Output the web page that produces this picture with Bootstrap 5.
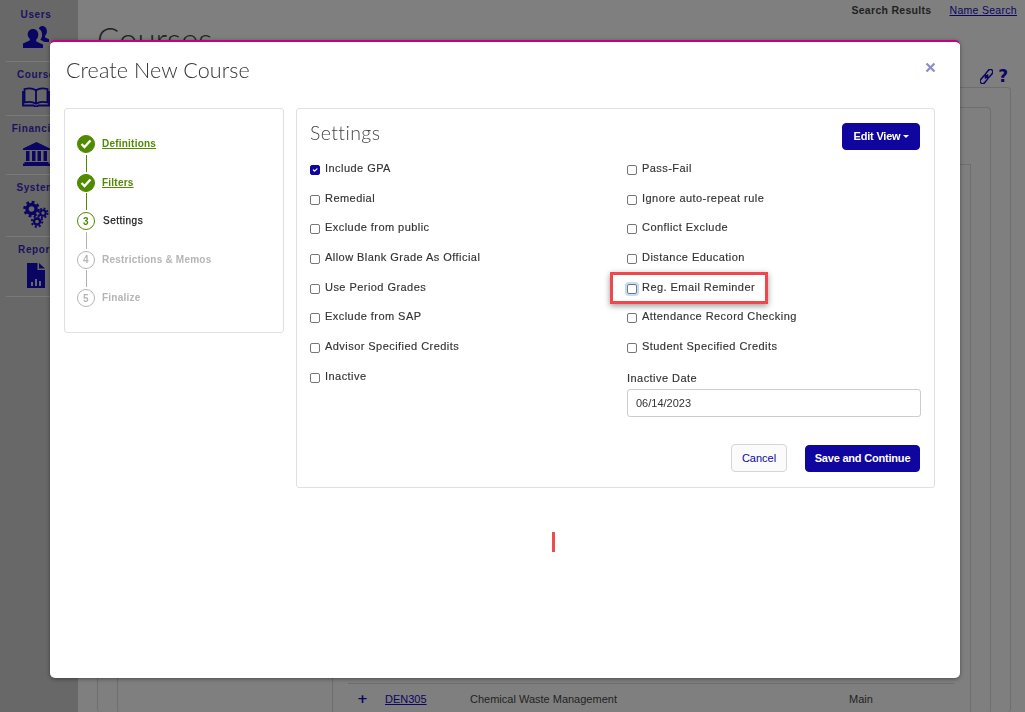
<!DOCTYPE html>
<html lang="en">
<head>
<meta charset="utf-8">
<title>Create New Course</title>
<link rel="stylesheet" href="https://cdn.jsdelivr.net/npm/bootstrap@5.3.0/dist/css/bootstrap.min.css">
<style>
html,body{height:712px;overflow:hidden;background:#7f7f7f;font-family:"Liberation Sans",Arial,sans-serif}
.shell{height:712px}
.side-rail{width:78px;flex:none;background:#686868;padding:0 0 0 6px}
.rail-item{border-bottom:1px solid #7a7a7a;padding-right:12px;text-align:center;color:#1a1260;font-weight:700;font-size:10px;letter-spacing:.6px;line-height:12px;white-space:nowrap}
.rail-item svg{display:block;margin:0 auto;fill:#0a0462}
.rail-item svg.rail-outline{fill:none}
.ri1{height:62px;padding-top:9px}.ri1 svg{margin-top:5px}
.ri2{height:54px;padding-top:7px}.ri2 svg{margin-top:6px}
.ri3{height:59px;padding-top:7px}.ri3 svg{margin-top:7px}
.ri4{height:62px;padding-top:7px}.ri4 svg{margin-top:6px}
.ri5{height:60px;padding-top:7px}.ri5 svg{margin-top:7px}
.page-main{flex:1;min-width:0;padding:0 14px 0 19px}
.top-links{height:19px;padding:3px 0 0 0;margin-right:-6px;font-size:10.5px;letter-spacing:.3px;color:#1f1f1f;gap:18px}
.top-links a{color:#0a0462;font-weight:400}
.page-title{font-family:Lato,sans-serif;font-weight:300;font-size:33px;line-height:40px;color:#222;margin:0;height:50px}
.help-icons{height:18px;gap:5px;padding-right:3px;color:#0a0462;font-family:"DejaVu Sans",sans-serif;font-weight:700;font-size:17px;line-height:14px}
.bg-panel{border:1px solid #6e6e6e;border-radius:4px;border-bottom:0;height:625px;padding:19px 19px 0 19px}
.bg-panel2{height:606px;padding:56px 19px 0 0}
.bg-panel3{height:550px;margin-left:214px;border-radius:0;padding:0;border-left:0}
.bg-list{height:100%;border-left:1px solid #6e6e6e;padding:518px 16px 0 15px}
.bg-row{border-top:1px solid #6e6e6e;height:29px;font-size:11px;color:#1f1f1f;padding-top:7px}
.bg-row a{color:#0a0462;width:85px}
.bg-name{width:379px}
.plus{width:37px;color:#0a0462;font-family:"DejaVu Sans",sans-serif;font-weight:700;padding-left:9px;font-size:13px;line-height:15px}
.dialog-layer{position:fixed;left:50px;top:40px;width:910px;height:638px}
.dlg{height:100%;background:#fff;border:0;border-top:2px solid #c6007e;border-radius:5px;box-shadow:0 1px 4px rgba(0,0,0,.4)}
.dlg-head{height:66px;padding:15px 16px 0 16px}
.dlg-title{font-family:Lato,sans-serif;font-weight:300;font-size:21.5px;line-height:26px;color:#333;margin:0;letter-spacing:.1px}
.dlg-close{background:none;border:0;padding:0;width:12px;height:12px;margin:4px 8px 0 0;line-height:0}
.dlg-body{padding:0 25px 0 14px;gap:12px}
.step-card{width:220px;height:225px;flex:none;border:1px solid #e0e0e0;border-radius:3px;padding:26px 0 0 12px}
.step{height:18px;font-size:10px;font-weight:700;letter-spacing:.22px;gap:7px;line-height:17px;color:#b5b5b5}
.step a{color:#4f8a00}
.step-dot{width:18px;height:18px;flex:none;border-radius:50%;border:1.5px solid #b5b5b5;display:flex;align-items:center;justify-content:center;font-size:10px;color:#b5b5b5;background:#fff}
.step-dot svg{display:block}
.dot-done{background:#4f8a00;border-color:#4f8a00}
.dot-now{border-color:#4f8a00;color:#4f8a00}
.now-label{color:#1c1c1c;padding-left:1px;font-weight:400;letter-spacing:.5px;-webkit-text-stroke:.25px #1c1c1c}
.step-line{width:1px;height:17px;margin:1.75px 0 1.75px 8.5px;background:#b0b0b0}
.line-done{background:#4f8a00}
.set-card{flex:1;height:380px;border:1px solid #e0e0e0;border-radius:3px;padding:14px 13px 0 13px}
.set-title{font-family:Lato,sans-serif;font-weight:300;font-size:19.5px;line-height:20px;letter-spacing:.4px;color:#444;margin:0}
.brand-btn{background:#10069f;border:1px solid #10069f;color:#fff;font-size:11px;font-weight:700;border-radius:4px;line-height:13px;letter-spacing:-.2px}
.brand-btn:hover{background:#10069f;color:#fff}
.edit-btn{width:78px;height:27px;padding:0 0 0 1px;margin-right:1px}
.edit-btn.dropdown-toggle::after{margin-left:3px;border-top-width:3px;border-right-width:3px;border-left-width:3px;vertical-align:2px}
.check-grid{margin:7px 0 0;--bs-gutter-x:0}
.left-col{width:317px;flex:none}
.right-col{width:294px;flex:none}
.chk-row{height:29.7px;display:flex;align-items:flex-start;gap:5px;padding-top:5px;margin:0;font-size:11px;font-weight:400;letter-spacing:.45px;color:#333;line-height:12px;white-space:nowrap;-webkit-text-stroke:.15px #333}
.chk-row .form-check-input{width:10px;height:10px;margin:3px 0 0;flex:none;border-radius:2px;border:1px solid #767676;float:none}
.chk-row .form-check-input:checked{background-color:#10069f;border-color:#10069f}
.glow{position:relative}
.glow .form-check-input{box-shadow:0 0 0 2px #c4dcf6}
.callout{position:absolute;left:-17px;top:-4px;width:158px;height:32px;border:3px solid #f0464c;box-shadow:0 2px 6px rgba(0,0,0,.4);pointer-events:none}
.date-label{font-size:11px;letter-spacing:.45px;color:#333;line-height:12px;margin:7px 0 5px;display:block;-webkit-text-stroke:.15px #333}
.date-input{height:28px;width:294px;font-size:11px;letter-spacing:0;color:#333;border:1px solid #ccc;border-radius:3px;padding:0 8px}
.foot-row{margin-top:27px;gap:18px;padding-right:1px}
.cancel-btn{width:56px;height:28px;padding:0;background:#fbfbfb;border:1px solid #d5d5d5;color:#10069f;font-size:11px;border-radius:4px}
.save-btn{width:115px;height:27px;padding:0}
.cursor-mark{position:fixed;left:552px;top:532px;width:3px;height:20px;background:#ef4a4f}
.bar-gap{fill:#686868}
</style>
</head>
<body>
<div class="shell d-flex">
  <nav class="side-rail">
    <div class="rail-item ri1">Users
      <svg width="26" height="22" viewBox="0 0 26 22"><path d="M10 3c3.200 0 5.300 2.400 5.300 5.700 0 2.200-.9 4-2.200 5l.2 1.700 6.700 3V22H0v-4.600l6.700-3 .2-1.700C5.600 11.700 4.700 10 4.700 8.700 4.700 5.400 6.800 3 10 3z"/><path d="M19 0c3 0 4.900 2.200 4.900 5.300 0 2-.8 3.700-2 4.600l.2 1.500 3.900 1.800V16h-4.500l-4.200-2.200c1.100-1.300 1.800-3.100 1.800-5.100 0-2.800-1.200-5-3.300-6.300C16.500 1 17.600 0 19 0z"/></svg>
    </div>
    <div class="rail-item ri2">Course
      <svg class="rail-outline" width="28" height="20" viewBox="0 0 28 20" stroke="#0a0462" stroke-width="1.800"><path d="M2.500 2C6.500 .9 11 1.200 14 3.300 17 1.200 21.500.9 25.500 2v13.500c-4-1-8.500-.7-11.500 1.200-3-1.900-7.500-2.200-11.500-1.200z"/><path d="M14 3.300v13.400"/><path d="M1 4v14.500h10.500l1.500 1h2l1.500-1H27V4"/></svg>
    </div>
    <div class="rail-item ri3">Financial
      <svg width="27" height="24" viewBox="0 0 27 24"><path d="M13.500 0L27 6.500V8H0V6.500zM3 9h3.500v10H3zM9 9h3.500v10H9zM14.500 9H18v10h-3.500zM20.500 9H24v10h-3.500zM1.500 20h24v1.500h-24zM0 21.500h27V24H0z"/></svg>
    </div>
    <div class="rail-item ri4">System
      <svg class="rail-outline" width="26" height="28" viewBox="0 0 26 28" stroke="#0a0462"><circle cx="8.500" cy="9" r="4.500" stroke-width="3.400"/><circle cx="8.500" cy="9" r="7" stroke-width="2.600" stroke-dasharray="2.750 2.750"/><circle cx="20" cy="13" r="2.700" stroke-width="2"/><circle cx="20" cy="13" r="4.500" stroke-width="2" stroke-dasharray="1.770 1.770"/><circle cx="14" cy="21.500" r="3" stroke-width="2.300"/><circle cx="14" cy="21.500" r="5.200" stroke-width="2" stroke-dasharray="2.040 2.040"/></svg>
    </div>
    <div class="rail-item ri5">Report
      <svg width="18" height="25" viewBox="0 0 18 25"><path d="M0 0h10.500v7H18v18H0zM12 0l6 5.500h-6z"/><rect class="bar-gap" x="4" y="19" width="2" height="4"/><rect class="bar-gap" x="8" y="16" width="2" height="7"/><rect class="bar-gap" x="12" y="18" width="2" height="5"/></svg>
    </div>
  </nav>
  <main class="page-main">
    <div class="top-links d-flex justify-content-end"><strong>Search Results</strong><a href="#">Name Search</a></div>
    <h1 class="page-title">Courses</h1>
    <div class="help-icons d-flex justify-content-end align-items-start">
      <svg width="13" height="15" viewBox="0 0 13 15" fill="none" stroke="#0a0462" stroke-width="1.500"><g transform="rotate(40 6.500 7.500)"><rect x="4" y="-1" width="5" height="9" rx="2.500"/><rect x="4" y="7" width="5" height="9" rx="2.500"/><path d="M6.500 5v5"/></g></svg>
      <span>?</span>
    </div>
    <div class="bg-panel">
      <div class="bg-panel bg-panel2">
        <div class="bg-panel bg-panel3">
          <div class="bg-list">
            <div class="bg-row d-flex"><span class="plus">+</span><a href="#">DEN305</a><span class="bg-name">Chemical Waste Management</span><span>Main</span></div>
          </div>
        </div>
      </div>
    </div>
  </main>
</div>

<div class="dialog-layer">
  <div class="modal-content dlg">
    <div class="dlg-head d-flex justify-content-between align-items-start">
      <h2 class="dlg-title">Create New Course</h2>
      <button class="dlg-close" type="button" aria-label="Close"><svg width="11" height="11" viewBox="0 0 11 11"><path d="M1.500 1.500l8 8M9.500 1.500l-8 8" stroke="#8e8bcb" stroke-width="2.200"/></svg></button>
    </div>
    <div class="dlg-body d-flex align-items-start">
      <aside class="step-card">
        <div class="step d-flex"><span class="step-dot dot-done"><svg width="12" height="10" viewBox="0 0 12 10"><path d="M1.500 5l3 3 6-6.500" fill="none" stroke="#fff" stroke-width="2.400"/></svg></span><a href="#">Definitions</a></div>
        <div class="step-line line-done"></div>
        <div class="step d-flex"><span class="step-dot dot-done"><svg width="12" height="10" viewBox="0 0 12 10"><path d="M1.500 5l3 3 6-6.500" fill="none" stroke="#fff" stroke-width="2.400"/></svg></span><a href="#">Filters</a></div>
        <div class="step-line line-done"></div>
        <div class="step d-flex"><span class="step-dot dot-now">3</span><span class="now-label">Settings</span></div>
        <div class="step-line"></div>
        <div class="step d-flex"><span class="step-dot">4</span><span>Restrictions &amp; Memos</span></div>
        <div class="step-line"></div>
        <div class="step d-flex"><span class="step-dot">5</span><span>Finalize</span></div>
      </aside>
      <section class="set-card">
        <div class="d-flex justify-content-between align-items-start">
          <h3 class="set-title">Settings</h3>
          <button class="btn brand-btn edit-btn dropdown-toggle" type="button">Edit View</button>
        </div>
        <div class="row flex-nowrap check-grid">
          <div class="col left-col">
            <label class="chk-row"><input class="form-check-input" type="checkbox" checked>Include GPA</label>
            <label class="chk-row"><input class="form-check-input" type="checkbox">Remedial</label>
            <label class="chk-row"><input class="form-check-input" type="checkbox">Exclude from public</label>
            <label class="chk-row"><input class="form-check-input" type="checkbox">Allow Blank Grade As Official</label>
            <label class="chk-row"><input class="form-check-input" type="checkbox">Use Period Grades</label>
            <label class="chk-row"><input class="form-check-input" type="checkbox">Exclude from SAP</label>
            <label class="chk-row"><input class="form-check-input" type="checkbox">Advisor Specified Credits</label>
            <label class="chk-row"><input class="form-check-input" type="checkbox">Inactive</label>
          </div>
          <div class="col right-col">
            <label class="chk-row"><input class="form-check-input" type="checkbox">Pass-Fail</label>
            <label class="chk-row"><input class="form-check-input" type="checkbox">Ignore auto-repeat rule</label>
            <label class="chk-row"><input class="form-check-input" type="checkbox">Conflict Exclude</label>
            <label class="chk-row"><input class="form-check-input" type="checkbox">Distance Education</label>
            <label class="chk-row glow"><input class="form-check-input" type="checkbox">Reg. Email Reminder<span class="callout"></span></label>
            <label class="chk-row"><input class="form-check-input" type="checkbox">Attendance Record Checking</label>
            <label class="chk-row"><input class="form-check-input" type="checkbox">Student Specified Credits</label>
            <label class="date-label" for="inactiveDate">Inactive Date</label>
            <input id="inactiveDate" class="form-control date-input" type="text" value="06/14/2023">
          </div>
        </div>
        <div class="foot-row d-flex justify-content-end align-items-end">
          <button class="btn cancel-btn" type="button">Cancel</button>
          <button class="btn brand-btn save-btn" type="button">Save and Continue</button>
        </div>
      </section>
    </div>
  </div>
</div>
<div class="cursor-mark"></div>
<script src="https://cdn.jsdelivr.net/npm/bootstrap@5.3.0/dist/js/bootstrap.bundle.min.js"></script>
</body>
</html>
